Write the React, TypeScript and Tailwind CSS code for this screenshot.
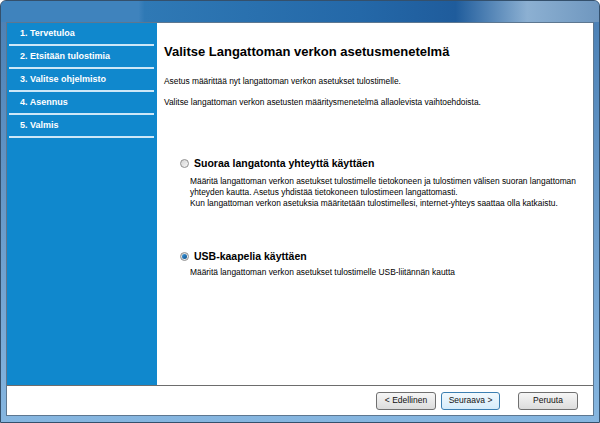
const steps = ["1. Tervetuloa", "2. Etsitään tulostimia", "3. Valitse ohjelmisto", "4. Asennus", "5. Valmis"];

function Radio({ checked = false }: { checked?: boolean }) {
  return (
    <span className="flex h-[9px] w-[9px] shrink-0 items-center justify-center rounded-full border border-[#8f8f8f] bg-gradient-to-br from-[#d4d4d4] to-[#f7f7f7]">
      {checked && <span className="h-[5px] w-[5px] rounded-full bg-gradient-to-br from-[#3d9be0] to-[#0c4f8a]" />}
    </span>
  );
}

function Button({ label, focused = false }: { label: string; focused?: boolean }) {
  return (
    <button
      className={
        "flex h-[18px] items-center justify-center rounded-[3px] border text-[8.5px] text-[#111] " +
        (focused
          ? "border-[#3c7fb1] bg-gradient-to-b from-[#f2f9fd] to-[#d6ecfa]"
          : "border-[#707070] bg-gradient-to-b from-[#f6f6f6] to-[#dcdcdc]")
      }
    >
      {label}
    </button>
  );
}

export default function App() {
  return (
    <div className="flex h-[423px] w-[600px] flex-col overflow-hidden rounded-t-[6px] border border-[#34506c] bg-gradient-to-b from-[#4a7fb4] to-[#86b6e0] font-['Liberation_Sans',Arial,sans-serif]">
      <div className="h-[21px] shrink-0 bg-[linear-gradient(90deg,#3f83bd_0%,#3f83bd_23%,#2f79b5_24%,#2468a8_60%,#1f5c9c_76%,#8cb0d2_88%,#6f97bf_100%)]" />
      <div className="mx-[5px] mb-[6px] flex flex-1 flex-col border border-[#5d7790] bg-white">
        <div className="flex flex-1">
          <div className="w-[150px] shrink-0 bg-[#1088cd]">
            {steps.map((step) => (
              <div key={step}>
                <div className="flex h-[21px] items-center pl-[13px] text-[9px] font-bold text-white">{step}</div>
                <div className="ml-[2px] mr-[3px] h-[2px] bg-[#cde7f7]" />
              </div>
            ))}
          </div>
          <div className="flex-1 pl-[7px] pt-[20px] text-[8.4px] text-black">
            <h1 className="text-[13px] leading-[18px] font-bold">Valitse Langattoman verkon asetusmenetelmä</h1>
            <p className="mt-[15px] leading-[11px]">Asetus määrittää nyt langattoman verkon asetukset tulostimelle.</p>
            <p className="mt-[10px] leading-[11px]">Valitse langattoman verkon asetusten määritysmenetelmä allaolevista vaihtoehdoista.</p>

            <div className="mt-[48px] flex items-center gap-[5px] pl-[16px]">
              <Radio />
              <span className="text-[10.5px] leading-[14px] font-bold">Suoraa langatonta yhteyttä käyttäen</span>
            </div>
            <div className="mt-[6px] pl-[26px] leading-[11px]">
              <p>Määritä langattoman verkon asetukset tulostimelle tietokoneen ja tulostimen välisen suoran langattoman</p>
              <p>yhteyden kautta. Asetus yhdistää tietokoneen tulostimeen langattomasti.</p>
              <p>Kun langattoman verkon asetuksia määritetään tulostimellesi, internet-yhteys saattaa olla katkaistu.</p>
            </div>

            <div className="mt-[40px] flex items-center gap-[5px] pl-[16px]">
              <Radio checked />
              <span className="text-[10.5px] leading-[14px] font-bold">USB-kaapelia käyttäen</span>
            </div>
            <p className="mt-[4px] pl-[26px] leading-[11px]">Määritä langattoman verkon asetukset tulostimelle USB-liitännän kautta</p>
          </div>
        </div>
        <div className="flex h-[30px] shrink-0 items-center border-t border-[#6d6d6d] pl-[369px]">
          <div className="grid grid-cols-[60px_59px] gap-[5px]">
            <Button label="< Edellinen" />
            <Button label="Seuraava >" focused />
          </div>
          <div className="ml-[18px] w-[60px]">
            <div className="grid">
              <Button label="Peruuta" />
            </div>
          </div>
        </div>
      </div>
    </div>
  );
}
